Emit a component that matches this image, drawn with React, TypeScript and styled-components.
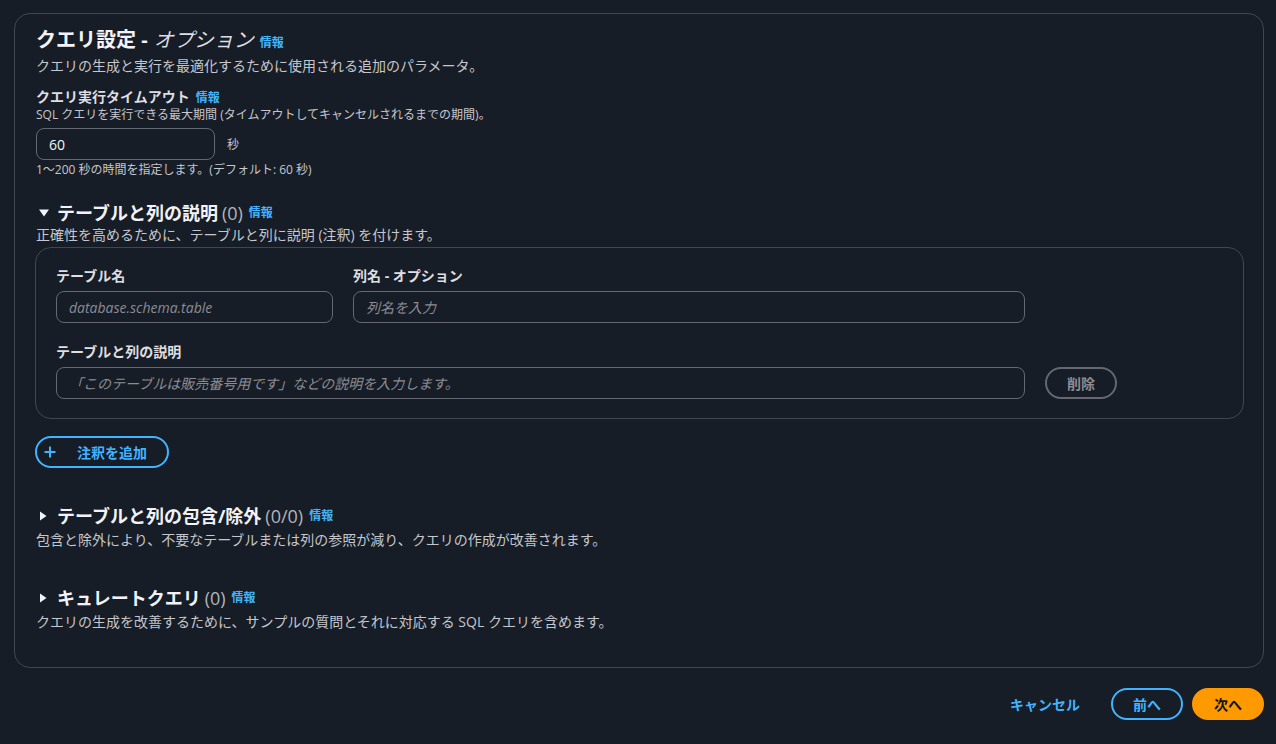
import React from 'react';
import styled, { createGlobalStyle } from 'styled-components';

const GlobalStyle = createGlobalStyle`
  html, body {
    margin: 0;
    padding: 0;
    background: #161d26;
  }
  body {
    font-family: "Open Sans", "Noto Sans CJK JP", sans-serif;
    color: #c6c6cd;
  }
  * {
    box-sizing: border-box;
  }
`;

const Page = styled.div`
  display: flex;
  flex-direction: column;
  padding: 13px 12px 0 14px;
`;

const Container = styled.section`
  border: 1px solid #424650;
  border-radius: 16px;
  padding: 14px 20px 35px 21px;
  display: flex;
  flex-direction: column;
`;

const Title = styled.h2`
  margin: 0;
  font-size: 20px;
  line-height: 24px;
  font-weight: 700;
  color: #f3f3f7;
  display: flex;
  align-items: baseline;
`;

const Optional = styled.span`
  font-style: italic;
  font-weight: 400;
  color: #dedee3;
  margin-left: 6px;
`;

const InfoLink = styled.a`
  font-size: 12px;
  line-height: 16px;
  font-weight: 700;
  color: #42b4ff;
  margin-left: 6px;
  text-decoration: none;
  cursor: pointer;
`;

const Description = styled.p<{ $top?: number }>`
  margin: ${p => p.$top ?? 4}px 0 0;
  font-size: 14px;
  line-height: 20px;
  color: #c6c6cd;
`;

const Field = styled.div`
  display: flex;
  flex-direction: column;
  margin-top: 11px;
`;

const Label = styled.label`
  font-size: 14px;
  line-height: 20px;
  font-weight: 700;
  color: #dedee3;
  display: flex;
  align-items: baseline;
`;

const Constraint = styled.div<{ $top?: number }>`
  font-size: 12px;
  line-height: 16px;
  color: #c6c6cd;
  margin-top: ${p => p.$top ?? 0}px;
`;

const InputRow = styled.div`
  display: flex;
  align-items: center;
  gap: 12px;
  margin-top: 5px;
`;

const Input = styled.input<{ $width?: number }>`
  width: ${p => (p.$width ? `${p.$width}px` : '100%')};
  flex-shrink: 0;
  height: 32px;
  background: #161d26;
  border: 1px solid #656871;
  border-radius: 8px;
  padding: 0 12px;
  font-family: "Open Sans", "Noto Sans CJK JP", sans-serif;
  font-size: 14px;
  color: #f3f3f7;
  outline: none;
  &::placeholder {
    color: #8c8c94;
    font-style: italic;
  }
`;

const Unit = styled.span`
  font-size: 12px;
  color: #c6c6cd;
`;

const Section = styled.div<{ $top: number }>`
  display: flex;
  flex-direction: column;
  margin-top: ${p => p.$top}px;
`;

const SectionHeading = styled.h3`
  margin: 0;
  font-size: 18px;
  line-height: 22px;
  font-weight: 700;
  color: #f3f3f7;
  display: flex;
  align-items: center;
`;

const Caret = styled.span`
  width: 21px;
  display: inline-flex;
  align-items: center;
  padding-left: 2px;
`;

const Counter = styled.span`
  font-weight: 400;
  color: #b4b4bb;
  margin-left: 4px;
`;

const InnerBox = styled.div`
  border: 1px solid #424650;
  border-radius: 16px;
  margin-top: 2px;
  margin-left: -1px;
  width: 1209px;
  padding: 18px 20px 19px 20px;
  display: flex;
  flex-direction: column;
  gap: 19px;
`;

const ColumnsRow = styled.div`
  display: grid;
  grid-template-columns: 277px 672px;
  column-gap: 20px;
`;

const Cell = styled.div`
  display: flex;
  flex-direction: column;
`;

const DescRow = styled.div`
  display: flex;
  align-items: center;
  gap: 20px;
  margin-top: 5px;
`;

const Button = styled.button<{ $variant: 'normal' | 'primary' | 'link' | 'disabled' }>`
  height: 32px;
  border-radius: 16px;
  padding: 0 20px;
  font-family: "Open Sans", "Noto Sans CJK JP", sans-serif;
  font-size: 14px;
  font-weight: 700;
  display: inline-flex;
  align-items: center;
  gap: 8px;
  cursor: pointer;
  flex-shrink: 0;
  border: 2px solid
    ${p =>
      p.$variant === 'normal'
        ? '#42b4ff'
        : p.$variant === 'primary'
        ? '#ff9900'
        : p.$variant === 'disabled'
        ? '#656871'
        : 'transparent'};
  background: ${p => (p.$variant === 'primary' ? '#ff9900' : 'transparent')};
  color: ${p =>
    p.$variant === 'primary'
      ? '#0f141a'
      : p.$variant === 'disabled'
      ? '#8c8c94'
      : '#42b4ff'};
`;

const AddButton = styled(Button)`
  margin-top: 17px;
  margin-left: -1px;
  align-self: flex-start;
  padding: 0 20px 0 7px;
  gap: 21px;
`;

const Footer = styled.footer`
  display: flex;
  justify-content: flex-end;
  align-items: center;
  gap: 9px;
  margin-top: 20px;
`;

const DownCaret = () => (
  <svg width="12" height="10" viewBox="0 0 12 10">
    <path d="M1 1.5 L11 1.5 L6 8.5 Z" fill="#f3f3f7" />
  </svg>
);

const RightCaret = () => (
  <svg width="10" height="12" viewBox="0 0 10 12">
    <path d="M2 1.5 L8.5 6 L2 10.5 Z" fill="#f3f3f7" />
  </svg>
);

const PlusIcon = () => (
  <svg width="12" height="12" viewBox="0 0 12 12">
    <path d="M6 0.5 V11.5 M0.5 6 H11.5" stroke="#42b4ff" strokeWidth="2" />
  </svg>
);

export default function App() {
  return (
    <>
      <GlobalStyle />
      <Page>
        <Container>
          <Title>
            クエリ設定 -<Optional>オプション</Optional>
            <InfoLink>情報</InfoLink>
          </Title>
          <Description>クエリの生成と実行を最適化するために使用される追加のパラメータ。</Description>

          <Field>
            <Label>
              クエリ実行タイムアウト<InfoLink>情報</InfoLink>
            </Label>
            <Constraint>SQL クエリを実行できる最大期間 (タイムアウトしてキャンセルされるまでの期間)。</Constraint>
            <InputRow>
              <Input $width={179} defaultValue="60" />
              <Unit>秒</Unit>
            </InputRow>
            <Constraint $top={2}>1〜200 秒の時間を指定します。(デフォルト: 60 秒)</Constraint>
          </Field>

          <Section $top={24}>
            <SectionHeading>
              <Caret>
                <DownCaret />
              </Caret>
              テーブルと列の説明<Counter>(0)</Counter>
              <InfoLink>情報</InfoLink>
            </SectionHeading>
            <Description $top={1}>正確性を高めるために、テーブルと列に説明 (注釈) を付けます。</Description>
            <InnerBox>
              <ColumnsRow>
                <Cell>
                  <Label>テーブル名</Label>
                  <InputRow>
                    <Input placeholder="database.schema.table" />
                  </InputRow>
                </Cell>
                <Cell>
                  <Label>列名 - オプション</Label>
                  <InputRow>
                    <Input placeholder="列名を入力" />
                  </InputRow>
                </Cell>
              </ColumnsRow>
              <Cell>
                <Label>テーブルと列の説明</Label>
                <DescRow>
                  <Input $width={969} placeholder="「このテーブルは販売番号用です」などの説明を入力します。" />
                  <Button $variant="disabled">削除</Button>
                </DescRow>
              </Cell>
            </InnerBox>
            <AddButton $variant="normal">
              <PlusIcon />
              注釈を追加
            </AddButton>
          </Section>

          <Section $top={37}>
            <SectionHeading>
              <Caret>
                <RightCaret />
              </Caret>
              テーブルと列の包含/除外<Counter>(0/0)</Counter>
              <InfoLink>情報</InfoLink>
            </SectionHeading>
            <Description $top={3}>包含と除外により、不要なテーブルまたは列の参照が減り、クエリの作成が改善されます。</Description>
          </Section>

          <Section $top={37}>
            <SectionHeading>
              <Caret>
                <RightCaret />
              </Caret>
              キュレートクエリ<Counter>(0)</Counter>
              <InfoLink>情報</InfoLink>
            </SectionHeading>
            <Description $top={3}>クエリの生成を改善するために、サンプルの質問とそれに対応する SQL クエリを含めます。</Description>
          </Section>
        </Container>

        <Footer>
          <Button $variant="link">キャンセル</Button>
          <Button $variant="normal">前へ</Button>
          <Button $variant="primary">次へ</Button>
        </Footer>
      </Page>
    </>
  );
}
